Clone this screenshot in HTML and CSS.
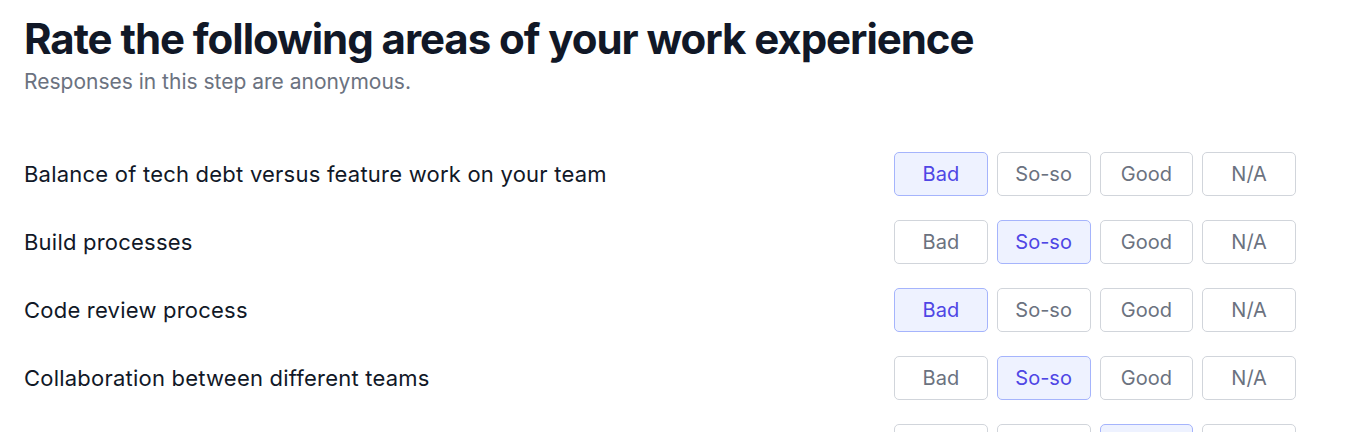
FILE: index.html
```html
<!DOCTYPE html>
<html>
<head>
<meta charset="utf-8">
<link rel="stylesheet" href="styles.css">
</head>
<body>
<main class="page">
  <header class="intro">
    <h1 class="title">Rate the following areas of your work experience</h1>
    <p class="subtitle">Responses in this step are anonymous.</p>
  </header>
  <div class="rows">
    <div class="row">
      <span class="label">Balance of tech debt versus feature work on your team</span>
      <div class="choices"><button class="choice is-selected">Bad</button><button class="choice">So-so</button><button class="choice">Good</button><button class="choice">N/A</button></div>
    </div>
    <div class="row">
      <span class="label">Build processes</span>
      <div class="choices"><button class="choice">Bad</button><button class="choice is-selected">So-so</button><button class="choice">Good</button><button class="choice">N/A</button></div>
    </div>
    <div class="row">
      <span class="label">Code review process</span>
      <div class="choices"><button class="choice is-selected">Bad</button><button class="choice">So-so</button><button class="choice">Good</button><button class="choice">N/A</button></div>
    </div>
    <div class="row">
      <span class="label">Collaboration between different teams</span>
      <div class="choices"><button class="choice">Bad</button><button class="choice is-selected">So-so</button><button class="choice">Good</button><button class="choice">N/A</button></div>
    </div>
    <div class="row">
      <span class="label">Deployment process</span>
      <div class="choices"><button class="choice">Bad</button><button class="choice">So-so</button><button class="choice is-selected">Good</button><button class="choice">N/A</button></div>
    </div>
  </div>
</main>
</body>
</html>
```

FILE: styles.css
```css
* { box-sizing: border-box; }
html, body { margin: 0; padding: 0; background: #ffffff; }
body { font-family: Inter, "Noto Sans", sans-serif; color: #111827; }
.page { padding: 14px 50px 0 24px; }
.title {
  margin: 0;
  font-size: 42px;
  line-height: 50px;
  font-weight: 700;
  letter-spacing: -0.025em;
  color: #111827;
}
.subtitle {
  margin: 4px 0 0;
  font-size: 21px;
  line-height: 28px;
  color: #6b7280;
}
.rows {
  margin-top: 56px;
  display: flex;
  flex-direction: column;
  gap: 24px;
}
.row {
  display: flex;
  align-items: center;
  justify-content: space-between;
}
.label { font-size: 22px; line-height: 28px; letter-spacing: 0.01em; color: #111827; }
.choices { display: flex; gap: 9px; }
.choice {
  width: 93.75px;
  height: 44px;
  border: 1px solid #d1d5db;
  border-radius: 5px;
  background: #ffffff;
  color: #6b7280;
  font-family: Inter, "Noto Sans", sans-serif;
  font-size: 20px;
  padding: 0;
}
.choice.is-selected {
  background: #eef2ff;
  border-color: #a5b4fc;
  color: #4f46e5;
}
```
